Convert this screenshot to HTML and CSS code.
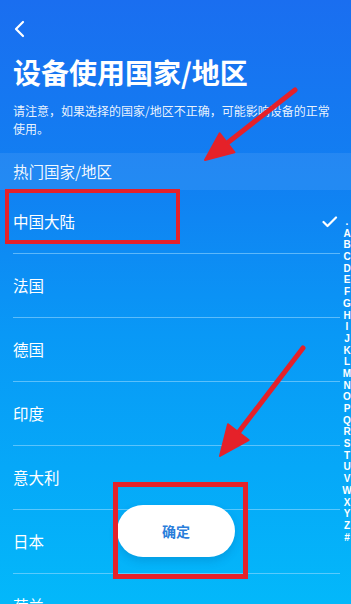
FILE: index.html
```html
<!DOCTYPE html>
<html lang="zh">
<head>
<meta charset="utf-8">
<link rel="stylesheet" href="styles.css">
</head>
<body>
<div class="screen">
  <div class="topbar">
    <svg class="back" width="14" height="18" viewBox="0 0 14 18"><path d="M10 2 L3 9 L10 16" fill="none" stroke="#fff" stroke-width="2.2" stroke-linecap="round" stroke-linejoin="round"/></svg>
  </div>
  <h1 class="title">设备使用国家/地区</h1>
  <p class="note">请注意，如果选择的国家/地区不正确，可能影响设备的正常使用。</p>
  <div class="band">热门国家/地区</div>
  <ul class="list">
    <li class="row">中国大陆</li>
    <li class="row">法国</li>
    <li class="row">德国</li>
    <li class="row">印度</li>
    <li class="row">意大利</li>
    <li class="row">日本</li>
    <li class="row">荷兰</li>
  </ul>

  <svg class="check" width="16" height="12" viewBox="0 0 16 12"><path d="M1.5 6 L5.5 10 L14 1.5" fill="none" stroke="#fff" stroke-width="2.2" stroke-linecap="round" stroke-linejoin="round"/></svg>

  <div class="index"><span>.</span><span>A</span><span>B</span><span>C</span><span>D</span><span>E</span><span>F</span><span>G</span><span>H</span><span>I</span><span>J</span><span>K</span><span>L</span><span>M</span><span>N</span><span>O</span><span>P</span><span>Q</span><span>R</span><span>S</span><span>T</span><span>U</span><span>V</span><span>W</span><span>X</span><span>Y</span><span>Z</span><span>#</span></div>

  <div class="ok">确定</div>

  <div class="mark mark1"></div>
  <div class="mark mark2"></div>

  <svg class="arrows" width="351" height="604" viewBox="0 0 351 604">
    <line x1="295" y1="90" x2="226" y2="144" stroke="#e52129" stroke-width="5" stroke-linecap="round"/>
    <polygon points="205,160 219.7,133.3 234.5,152.3" fill="#e52129" stroke="#e52129" stroke-width="2" stroke-linejoin="round"/>
    <line x1="303" y1="348" x2="238" y2="433" stroke="#e52129" stroke-width="5" stroke-linecap="round"/>
    <polygon points="220,456 228,424.3 248.6,440.1" fill="#e52129" stroke="#e52129" stroke-width="2" stroke-linejoin="round"/>
  </svg>
</div>
</body>
</html>
```
FILE: styles.css
```css
html, body {
  margin: 0;
  padding: 0;
}
body {
  font-family: "Noto Sans CJK SC", "Noto Sans", sans-serif;
  color: #fff;
}
.screen {
  position: relative;
  width: 351px;
  height: 604px;
  overflow: hidden;
  background: linear-gradient(180deg, #1a6ef0 0%, #1180f2 30%, #0998f6 55%, #03b8fa 100%);
}
.topbar {
  height: 48px;
  padding-left: 13px;
  box-sizing: border-box;
  padding-top: 20px;
}
.back {
  display: block;
}
.title {
  margin: 6px 0 0 13px;
  font-size: 28px;
  line-height: 36px;
  font-weight: 700;
  letter-spacing: 0;
}
.note {
  margin: 12px 18px 0 13px;
  font-size: 12px;
  line-height: 18px;
  color: rgba(255, 255, 255, 0.92);
}
.band {
  margin-top: 15px;
  height: 37px;
  line-height: 37px;
  padding-left: 13px;
  font-size: 15.5px;
  background: rgba(255, 255, 255, 0.08);
  color: rgba(255, 255, 255, 0.95);
}
.list {
  list-style: none;
  margin: 0;
  padding: 0;
}
.row {
  height: 63px;
  line-height: 63px;
  margin: 0 11px 0 13px;
  font-size: 15.5px;
  border-bottom: 1px solid rgba(160, 220, 255, 0.55);
}
.check {
  position: absolute;
  left: 322px;
  top: 216px;
}
.index {
  position: absolute;
  left: 341px;
  top: 216px;
  width: 12px;
  font-family: "Liberation Sans", Arial, sans-serif;
  font-weight: 700;
  font-size: 10px;
  text-align: center;
}
.index span {
  display: block;
  height: 11.7px;
  line-height: 11.7px;
  overflow: visible;
}
.ok {
  position: absolute;
  left: 117px;
  top: 505px;
  width: 118px;
  height: 52px;
  border-radius: 26px;
  background: #fff;
  color: #2a7edb;
  font-size: 14px;
  font-weight: 600;
  line-height: 52px;
  text-align: center;
  box-shadow: 0 4px 8px rgba(0, 60, 120, 0.18);
}
.mark {
  position: absolute;
  box-sizing: border-box;
  border: 4px solid #e5212a;
}
.mark1 {
  left: 5px;
  top: 189px;
  width: 175px;
  height: 55px;
}
.mark2 {
  left: 113px;
  top: 482px;
  width: 135px;
  height: 97px;
  border-width: 5px;
}
.arrows {
  position: absolute;
  left: 0;
  top: 0;
  pointer-events: none;
}
```
